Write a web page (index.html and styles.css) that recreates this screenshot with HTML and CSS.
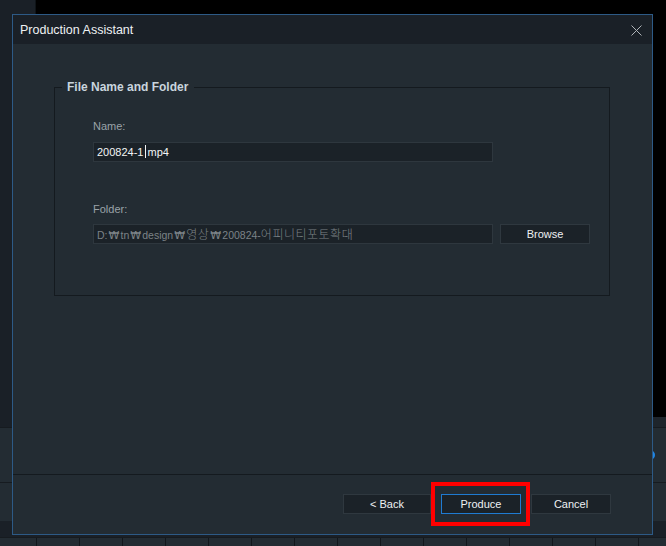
FILE: index.html
```html
<!DOCTYPE html>
<html>
<head>
<meta charset="utf-8">
<link rel="stylesheet" href="styles.css">
</head>
<body>
<div class="app">
  <div class="top">
    <div class="sidebar"></div>
    <div class="stage">
      <div class="stage-black"></div>
      <div class="stage-band"></div>
    </div>
  </div>
  <div class="track track1"><span class="knob"></span></div>
  <div class="track track2"></div>
  <div class="bar"></div>
  <div class="cells">
    <span class="cell first"></span><span class="cell"></span><span class="cell"></span><span class="cell"></span><span class="cell"></span><span class="cell"></span><span class="cell"></span><span class="cell"></span><span class="cell"></span><span class="cell"></span><span class="cell"></span><span class="cell"></span><span class="cell"></span><span class="cell"></span><span class="cell"></span><span class="cell"></span>
  </div>

  <div class="dialog">
    <div class="titlebar">
      <span class="title">Production Assistant</span>
      <svg class="close" width="11" height="11" viewBox="0 0 11 11"><path d="M0.5 0.5 L10.5 10.5 M10.5 0.5 L0.5 10.5" stroke="#aeb3b7" stroke-width="1" fill="none"/></svg>
    </div>
    <div class="content">
      <div class="group">
        <span class="legend">File Name and Folder</span>
        <div class="label">Name:</div>
        <div class="input name-input">200824-1<span class="caret"></span>mp4</div>
        <div class="label folder-label">Folder:</div>
        <div class="row">
          <div class="input folder-input">D:<span class="won">₩</span>tn<span class="won">₩</span>design<span class="won">₩</span><span class="ko">영상</span><span class="won">₩</span>200824-<span class="ko">어피니티포토확대</span></div>
          <div class="btn browse">Browse</div>
        </div>
      </div>
    </div>
    <div class="footer">
      <div class="btn back">&lt; Back</div>
      <div class="produce-wrap">
        <div class="btn produce">Produce</div>
        <span class="highlight"></span>
      </div>
      <div class="btn cancel">Cancel</div>
    </div>
  </div>
</div>
</body>
</html>
```

FILE: styles.css
```css
* { box-sizing: border-box; }
html, body { margin: 0; padding: 0; }
body {
  width: 666px;
  height: 546px;
  overflow: hidden;
  background: #000;
  font-family: "Liberation Sans", Arial, "Noto Sans CJK KR", sans-serif;
}
.app {
  position: relative;
  width: 666px;
  height: 546px;
  display: flex;
  flex-direction: column;
}
.top {
  height: 427px;
  display: flex;
}
.sidebar {
  width: 36px;
  background: #1a2027;
  border-right: 1px solid #0f1418;
}
.stage {
  flex: 1;
  display: flex;
  flex-direction: column;
}
.stage-black { flex: 1; background: #000; }
.stage-band { height: 10px; background: #1e252c; }
.track {
  position: relative;
  background: #232c33;
  border-top: 1px solid #161b20;
}
.track1 { height: 55px; }
.track2 { height: 39px; }
.knob {
  position: absolute;
  left: 644px;
  top: 22px;
  width: 11px;
  height: 10px;
  border-radius: 50%;
  background: #1f86e6;
}
.bar { height: 16px; background: #1a2027; }
.cells {
  flex: 1;
  display: flex;
  background: #232c33;
  border-top: 1px solid #161b20;
}
.cell {
  width: 43px;
  flex: none;
  border-left: 1px solid #12171c;
}
.cell.first { width: 36px; border-left: none; }

/* Dialog window */
.dialog {
  position: absolute;
  left: 12px;
  top: 14px;
  width: 641px;
  height: 521px;
  border: 1px solid #2d5a86;
  background: #232c33;
  display: flex;
  flex-direction: column;
}
.titlebar {
  height: 29px;
  background: #1a2027;
  display: flex;
  align-items: center;
  justify-content: space-between;
  padding: 0 10px 0 7px;
}
.title {
  color: #eef1f3;
  font-size: 12.5px;
  margin-top: 1px;
}
.close { display: block; margin-top: 1px; }
.content {
  flex: 1;
  padding: 43px 0 0 41px;
}
.group {
  position: relative;
  width: 556px;
  height: 209px;
  border: 1px solid #141a1f;
  padding: 31px 0 0 38px;
}
.legend {
  position: absolute;
  left: 7px;
  top: -8px;
  padding: 0 6px 0 5px;
  background: #232c33;
  color: #c9d5de;
  font-size: 12px;
  font-weight: bold;
  line-height: 14px;
}
.label {
  color: #9aa3a8;
  font-size: 11px;
  line-height: 14px;
  height: 14px;
}
.input {
  width: 400px;
  height: 20px;
  background: #1b2228;
  border: 1px solid #2e373e;
  font-size: 11px;
  line-height: 18px;
  padding-left: 3px;
  white-space: nowrap;
  overflow: hidden;
}
.name-input {
  margin-top: 9px;
  color: #f2f4f5;
}
.caret {
  display: inline-block;
  width: 1px;
  height: 13px;
  background: #f2f4f5;
  vertical-align: -2px;
  margin: 0 2px 0 1px;
}
.folder-label { margin-top: 40px; }
.row {
  margin-top: 8px;
  display: flex;
  gap: 7px;
}
.folder-input {
  color: #7b8287;
  font-size: 10.5px;
}
.ko {
  font-family: "Noto Sans CJK KR", sans-serif;
  font-size: 12px;
  font-weight: 300;
  letter-spacing: 0.5px;
}
.won {
  display: inline-block;
  width: 13px;
  text-align: center;
  font-family: "DejaVu Sans", sans-serif;
  font-size: 11px;
}
.btn {
  height: 20px;
  background: #1b2228;
  border: 1px solid #2f383f;
  color: #eef1f3;
  font-size: 11px;
  line-height: 18px;
  text-align: center;
}
.browse { width: 90px; }

.footer {
  height: 60px;
  border-top: 1px solid #141a1f;
  display: flex;
  align-items: flex-start;
  padding: 19px 0 0 330px;
}
.back { width: 88px; }
.produce-wrap {
  position: relative;
  margin-left: 10px;
}
.produce {
  width: 80px;
  border-color: #1f7bd2;
}
.highlight {
  position: absolute;
  left: -10px;
  right: -9px;
  top: -12px;
  bottom: -12px;
  border: 4px solid #ff0000;
}
.cancel { width: 80px; margin-left: 10px; }
```
